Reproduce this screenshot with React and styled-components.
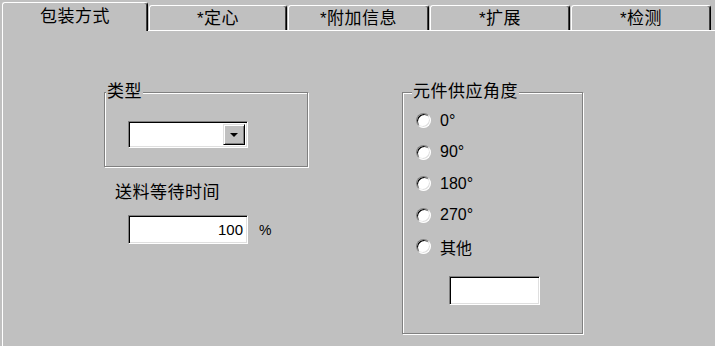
import styled, { createGlobalStyle } from "styled-components";

const GlobalStyle = createGlobalStyle`
  html, body {
    margin: 0;
    padding: 0;
    background: #c0c0c0;
  }
  body {
    font-family: "Liberation Sans", "Noto Sans CJK SC", sans-serif;
    color: #000;
  }
`;

const Window = styled.div`
  width: 715px;
  height: 346px;
  overflow: hidden;
  background: #c0c0c0;
  display: flex;
  flex-direction: column;
`;

const TabStrip = styled.div`
  display: flex;
  align-items: flex-end;
  gap: 1px;
  height: 30px;
  padding-left: 2px;
  position: relative;
  z-index: 1;
`;

const Tab = styled.div`
  box-sizing: border-box;
  width: ${(p) => p.$w}px;
  height: ${(p) => (p.$active ? 29 : 25)}px;
  margin-bottom: ${(p) => (p.$active ? -1 : 0)}px;
  background: #c0c0c0;
  border-top: 1px solid #fff;
  border-left: 1px solid #fff;
  border-right: 1px solid #000;
  border-radius: 3px 3px 0 0;
  box-shadow: inset -1px 0 0 #404040;
  display: flex;
  justify-content: center;
  padding-top: ${(p) => (p.$active ? 4 : 3)}px;
  font-size: 17px;
  line-height: 20px;
  letter-spacing: 0.5px;
`;

const Panel = styled.div`
  flex: 1;
  border-top: 1px solid #fff;
  border-left: 1px solid #fff;
  margin-left: 2px;
  display: flex;
  gap: 94px;
  padding: 51px 0 0 101px;
`;

const Column = styled.div`
  display: flex;
  flex-direction: column;
`;

const Group = styled.fieldset`
  margin: 0;
  padding: 0;
  min-inline-size: 0;
  width: ${(p) => p.$w}px;
  box-sizing: border-box;
  border: 1px solid #808080;
  box-shadow: inset 1px 1px 0 #fff, 1px 1px 0 #fff;
`;

const Legend = styled.legend`
  margin-left: ${(p) => p.$indent}px;
  padding: 0 1px;
  background: #c0c0c0;
  font-size: 17px;
  line-height: 20px;
  letter-spacing: 0.5px;
`;

const GroupBody = styled.div`
  padding: ${(p) => p.$pad};
  display: flex;
  flex-direction: column;
`;

const sunken = `
  box-sizing: border-box;
  background: #fff;
  border: 1px solid;
  border-color: #808080 #fff #fff #808080;
  box-shadow: inset 1px 1px 0 #000, inset -1px -1px 0 #dfdfdf;
`;

const Combo = styled.div`
  ${sunken}
  width: 120px;
  height: 27px;
  padding: 2px;
  display: flex;
  justify-content: flex-end;
`;

const DropButton = styled.div`
  box-sizing: border-box;
  width: 22px;
  height: 100%;
  background: #c0c0c0;
  border: 1px solid;
  border-color: #dfdfdf #000 #000 #dfdfdf;
  box-shadow: inset 1px 1px 0 #fff, inset -1px -1px 0 #808080;
  display: flex;
  align-items: center;
  justify-content: center;
`;

const Arrow = styled.div`
  width: 0;
  height: 0;
  border-left: 4px solid transparent;
  border-right: 4px solid transparent;
  border-top: 4px solid #000;
`;

const FieldLabel = styled.div`
  margin: 16px 0 0 11px;
  font-size: 17px;
  line-height: 20px;
  letter-spacing: 0.5px;
`;

const InputRow = styled.div`
  display: flex;
  align-items: center;
  gap: 11px;
  margin: 12px 0 0 24px;
`;

const TextBox = styled.div`
  ${sunken}
  width: ${(p) => p.$w}px;
  height: 29px;
  padding: 0 4px;
  display: flex;
  align-items: center;
  justify-content: flex-end;
  font-size: 15px;
`;

const Unit = styled.span`
  font-size: 14px;
`;

const RadioRow = styled.div`
  height: 31.5px;
  display: flex;
  align-items: center;
  gap: 9px;
  font-size: 16px;
`;

const RadioDot = styled.span`
  box-sizing: border-box;
  width: 15px;
  height: 15px;
  border-radius: 50%;
  background: #fff;
  border: 1px solid;
  border-color: #808080 #fff #fff #808080;
  box-shadow: inset 1px 1px 0 #000, inset -1px -1px 0 #dfdfdf;
`;

const OtherBox = styled(TextBox)`
  margin: 13px 0 0 33px;
`;

const tabs = [
  { label: "包装方式", w: 146, active: true },
  { label: "*定心", w: 138 },
  { label: "*附加信息", w: 141 },
  { label: "*扩展", w: 140 },
  { label: "*检测", w: 140 },
];

const angles = ["0°", "90°", "180°", "270°", "其他"];

export default function App() {
  return (
    <>
      <GlobalStyle />
      <Window>
        <TabStrip>
          {tabs.map((t) => (
            <Tab key={t.label} $w={t.w} $active={t.active}>
              {t.label}
            </Tab>
          ))}
        </TabStrip>
        <Panel>
          <Column>
            <Group $w={204}>
              <Legend $indent={1}>类型</Legend>
              <GroupBody $pad="19px 0 18px 23px">
                <Combo>
                  <DropButton>
                    <Arrow />
                  </DropButton>
                </Combo>
              </GroupBody>
            </Group>
            <FieldLabel>送料等待时间</FieldLabel>
            <InputRow>
              <TextBox $w={120}>100</TextBox>
              <Unit>%</Unit>
            </InputRow>
          </Column>
          <Column>
            <Group $w={181}>
              <Legend $indent={9}>元件供应角度</Legend>
              <GroupBody $pad="3px 0 28px 13px">
                {angles.map((a) => (
                  <RadioRow key={a}>
                    <RadioDot />
                    {a}
                  </RadioRow>
                ))}
                <OtherBox $w={91} />
              </GroupBody>
            </Group>
          </Column>
        </Panel>
      </Window>
    </>
  );
}
